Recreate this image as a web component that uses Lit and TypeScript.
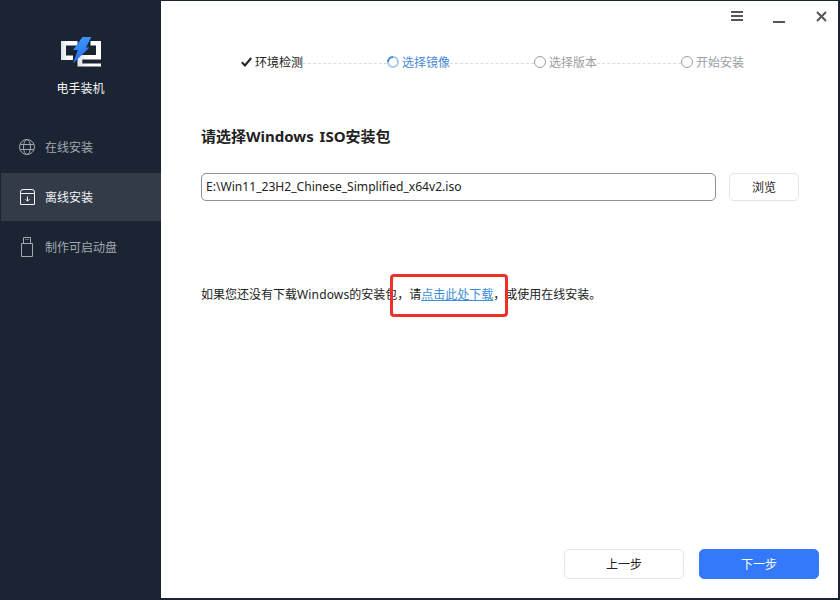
import { LitElement, html, css } from "lit";
import { customElement } from "lit/decorators.js";

@customElement("app-root")
export class AppRoot extends LitElement {
  static styles = css`
    :host { display: block; width: 840px; height: 600px; background: #1a2433; font-family: "Noto Sans", "Noto Sans CJK SC", sans-serif; overflow: hidden; }
    .app { display: flex; height: 600px; }
    .side { width: 161px; flex: none; display: flex; flex-direction: column; align-items: stretch; }
    .brand { height: 123px; display: flex; flex-direction: column; align-items: center; padding-top: 37px; box-sizing: border-box; }
    .brand svg { display: block; }
    .brand span { color: #f2f4f6; font-size: 12px; line-height: 16px; margin-top: 12px; }
    .nav { display: flex; flex-direction: column; gap: 2px; padding-left: 1px; }
    .item { height: 48px; display: flex; align-items: center; gap: 10px; padding-left: 18px; color: #a3a8b0; font-size: 12px; }
    .item svg { width: 16px; height: 20px; flex: none; }
    .item.on { background: #333b49; color: #f2f4f6; }
    .main { flex: 1; min-width: 0; margin: 1px 2px 2px 0; background: #fff; display: flex; flex-direction: column; color: #222; position: relative; }
    .top { height: 29px; display: flex; justify-content: flex-end; align-items: flex-start; gap: 30px; padding: 10px 11px 0 0; box-sizing: border-box; }
    .top svg { display: block; }
    .top .close { margin-left: 1px; }
    .steps { display: flex; align-items: center; margin: 21px 0 0 80px; width: 503px; height: 22px; font-size: 12px; }
    .step { display: flex; align-items: center; gap: 3px; white-space: nowrap; color: #9b9ea3; }
    .step.done { color: #222; }
    .step.cur { color: #4a8ad4; }
    .step svg { display: block; flex: none; }
    .dash { flex: 1; border-top: 1px dashed #d9dcdf; margin-top: 2px; }
    .body { padding: 52px 39px 0 40px; flex: 1; display: flex; flex-direction: column; }
    h2 { margin: 0; font-size: 15px; line-height: 22px; font-weight: 700; color: #222; word-spacing: 2px; }
    .row { display: flex; gap: 13px; margin-top: 26px; }
    .input { width: 515px; height: 28px; box-sizing: border-box; border: 1px solid #8b929b; border-radius: 5px; padding-left: 4px; font-size: 12.1px; line-height: 26px; color: #222; }
    .btn { box-sizing: border-box; display: flex; align-items: center; justify-content: center; font-size: 12px; border: 1px solid #e2e5e9; border-radius: 5px; color: #222; background: #fff; }
    .browse { width: 70px; height: 28px; }
    .hint { position: relative; margin: 84px 0 0; font-size: 12px; line-height: 20px; color: #222; }
    .hint a { color: #3d8ed6; text-decoration: underline; }
    .latin { letter-spacing: 0.15px; }
    .mark { position: absolute; left: 189px; top: -11px; width: 118px; height: 43px; box-sizing: border-box; border: 3px solid #ee2f2a; border-radius: 4px; }
    .foot { display: flex; justify-content: flex-end; gap: 15px; padding: 0 19px 19px 0; }
    .foot .btn { width: 120px; height: 30px; }
    .next { background: #3579fb; border-color: #3579fb; color: #fff; }
  `;

  private logo() {
    return html`<svg width="40" height="32" viewBox="0 0 40 32">
      <defs>
        <linearGradient id="g" x1="0" y1="0" x2="0.2" y2="1">
          <stop offset="0" stop-color="#3f9dfb" /><stop offset="1" stop-color="#2a6cf2" />
        </linearGradient>
        <linearGradient id="w" x1="0" y1="0" x2="1" y2="0">
          <stop offset="0" stop-color="#dfe2e6" /><stop offset="0.5" stop-color="#fff" /><stop offset="1" stop-color="#fff" />
        </linearGradient>
      </defs>
      <path fill="url(#w)" d="M0 4H16.500V8.500H5V18.500H12V23H0Z" />
      <path fill="url(#w)" d="M29.500 4H40V22.500H21.300V26.500H40V29.500H16.500V18H35V8.500H29.500Z" />
      <path fill="url(#g)" d="M21.500 0H30.300L25 10.500H28.500L12 26.500L16.800 13H12Z" />
    </svg>`;
  }

  private globe() {
    return html`<svg viewBox="0 0 16 20" fill="none" stroke="currentColor" stroke-width="1">
      <circle cx="8" cy="10" r="7.500" /><ellipse cx="8" cy="10" rx="3.500" ry="7.500" />
      <path d="M1.300 7.500H14.700M1.300 12.500H14.700" />
    </svg>`;
  }
  private box() {
    return html`<svg viewBox="0 0 16 20" fill="none" stroke="currentColor" stroke-width="1">
      <path d="M1.500 17.500H15.500V5Q15.500 2.500 13 2.500H4Q1.500 2.500 1.500 5Z" />
      <path d="M1.500 6.500H15.500M8.500 9.500V14M6.500 12.200L8.500 14.200L10.500 12.200" />
    </svg>`;
  }
  private usb() {
    return html`<svg viewBox="0 0 16 20" fill="none" stroke="currentColor" stroke-width="1">
      <path d="M2.500 6.500H13.500V19.500H2.500ZM4.500 6.500V0.500H11.500V6.500" />
      <path d="M6.500 2.500H7.500M8.500 2.500H9.500" />
    </svg>`;
  }

  render() {
    return html`<div class="app">
      <aside class="side">
        <div class="brand">${this.logo()}<span>电手装机</span></div>
        <nav class="nav">
          <div class="item">${this.globe()}在线安装</div>
          <div class="item on">${this.box()}离线安装</div>
          <div class="item">${this.usb()}制作可启动盘</div>
        </nav>
      </aside>
      <main class="main">
        <div class="top">
          <svg width="12" height="11" viewBox="0 0 12 11" fill="#555"><rect width="12" height="2" y="0"/><rect width="12" height="2" y="4"/><rect width="12" height="2" y="8"/></svg>
          <svg width="12" height="12" viewBox="0 0 12 12" fill="#555"><rect width="12" height="2" y="10"/></svg>
          <svg class="close" width="11" height="11" viewBox="0 0 11 11" stroke="#555" stroke-width="2"><path d="M1 1L10 10M10 1L1 10"/></svg>
        </div>
        <div class="steps">
          <div class="step done"><svg width="11" height="10" viewBox="0 0 11 10" fill="none" stroke="#222" stroke-width="2"><path d="M0.800 5.200L4 8.500L10.200 1"/></svg>环境检测</div>
          <div class="dash"></div>
          <div class="step cur"><svg width="12" height="12" viewBox="0 0 12 12" fill="none" stroke-width="2"><circle cx="6" cy="6" r="5" stroke="#a9c8ee"/><path d="M1 6A5 5 0 0 1 6 1" stroke="#4a8ad4"/></svg>选择镜像</div>
          <div class="dash"></div>
          <div class="step"><svg width="12" height="12" viewBox="0 0 12 12" fill="none" stroke="#9b9ea3"><circle cx="6" cy="6" r="5.500"/></svg>选择版本</div>
          <div class="dash"></div>
          <div class="step"><svg width="12" height="12" viewBox="0 0 12 12" fill="none" stroke="#9b9ea3"><circle cx="6" cy="6" r="5.500"/></svg>开始安装</div>
        </div>
        <div class="body">
          <h2>请选择Windows ISO安装包</h2>
          <div class="row">
            <div class="input">E:\\Win11_23H2_Chinese_Simplified_x64v2.iso</div>
            <div class="btn browse">浏览</div>
          </div>
          <p class="hint">如果您还没有下载<span class="latin">Windows</span>的安装包，请<a>点击此处下载</a>，或使用在线安装。<span class="mark"></span></p>
        </div>
        <div class="foot">
          <div class="btn">上一步</div>
          <div class="btn next">下一步</div>
        </div>
      </main>
    </div>`;
  }
}
